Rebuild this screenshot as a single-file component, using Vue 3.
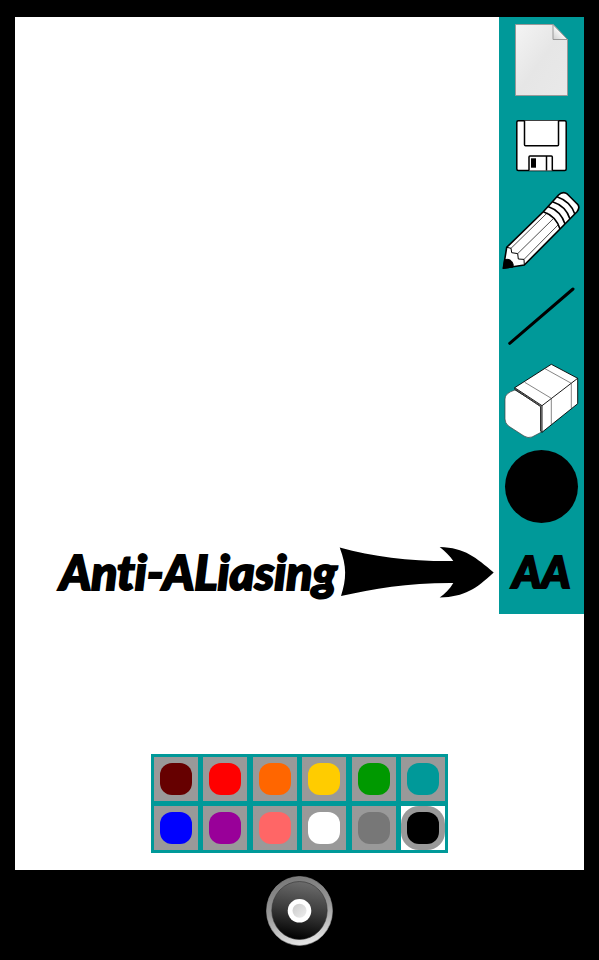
<script setup>
import { ref } from 'vue'

const colors = [
  { name: 'Maroon', value: '#660000' },
  { name: 'Red', value: '#ff0000' },
  { name: 'Orange', value: '#ff6600' },
  { name: 'Yellow', value: '#ffcc00' },
  { name: 'Green', value: '#009900' },
  { name: 'Teal', value: '#009999' },
  { name: 'Blue', value: '#0000ff' },
  { name: 'Purple', value: '#990099' },
  { name: 'Pink', value: '#ff6666' },
  { name: 'White', value: '#ffffff' },
  { name: 'Gray', value: '#777777' },
  { name: 'Black', value: '#000000' }
]
const selected = ref('Black')
</script>

<template>
  <div class="device">
    <main class="screen">
      <div class="workspace">
        <section class="canvas">
          <div class="callout">
            <span class="callout-text">Anti-ALiasing</span>
            <svg class="arrow" viewBox="0 0 155 52" aria-hidden="true">
              <path d="M.7 1.4 C35 10.7 72 15.4 114.3 15 C111 10 106 5 100.7 1 C126 1.7 137 11.7 154.7 26.4 C137 42.7 126 50.7 100.7 51.4 C106 47.7 111 42.7 114.3 37 C70 36.7 35 42.7 2 50 C7.5 32.7 8 20.7 .7 1.4Z" />
            </svg>
          </div>
        </section>

        <nav class="toolbar" aria-label="Tools">
          <button class="tool" type="button" aria-label="New page">
            <svg viewBox="0 0 85 85">
              <defs>
                <linearGradient id="paper" x1="0" y1="0" x2="1" y2="1">
                  <stop offset="0" stop-color="#f4f4f4" />
                  <stop offset=".5" stop-color="#e6e6e6" />
                  <stop offset="1" stop-color="#e9e9e9" />
                </linearGradient>
                <linearGradient id="fold" x1="0" y1="1" x2=".6" y2=".4">
                  <stop offset="0" stop-color="#cfcfcf" />
                  <stop offset="1" stop-color="#ffffff" />
                </linearGradient>
              </defs>
              <path d="M16.5 6.5H54L68.5 21.5V77.5H16.5Z" fill="url(#paper)" stroke="#999" />
              <path d="M54 6.5L68.5 21.5H54Z" fill="url(#fold)" stroke="#999" />
            </svg>
          </button>

          <button class="tool" type="button" aria-label="Save">
            <svg viewBox="0 0 85 85" fill="#fff" stroke="#000" stroke-width="1.5">
              <rect x="17.8" y="17.7" width="49.4" height="49.8" rx="1.5" />
              <path d="M25.5 17.7V41.8Q25.5 42.8 26.5 42.8H58.5Q59.5 42.8 59.5 41.8V17.7" />
              <path d="M30 67.5V54Q30 53 31 53H52.3Q53.3 53 53.3 54V67.5M47.5 53V67.5" />
              <rect x="32" y="55.3" width="5" height="9.4" fill="#000" stroke="none" />
            </svg>
          </button>

          <button class="tool" type="button" aria-label="Pencil">
            <svg viewBox="0 0 85 85" fill="none" stroke="#000" stroke-linejoin="round">
              <path d="M4.3 80.3L7.7 59.3L44.3 23.7L59.5 7Q64 2.7 68.5 6.2L78 15.7Q81.7 19 78 23.7L61 41L25.3 77Z" fill="#fff" stroke-width="1.6" />
              <path d="M4.3 80.3L5.5 71.8Q11 70 13.5 74.5Q14.8 77 13.8 79.2Z" fill="#000" />
              <path d="M7.7 59.3L12 60.3L12.7 64.7L18.7 65.6L19.3 71L25 71.4L25.3 77" />
              <path d="M12 60.3L48.3 24.8M18.7 65.6L54.5 30.5M25 71.4L59.5 36.5" stroke="#222" stroke-width=".8" />
              <path d="M44.3 23.7Q57 28 61 41M49 18.5Q62 23 66 36M53.5 13.7Q67 18 71 31M58 8.8Q71.5 13.5 75.8 26" stroke-width="1.6" />
            </svg>
          </button>

          <button class="tool" type="button" aria-label="Line">
            <svg viewBox="0 0 85 85">
              <path d="M10.7 70.3L74 16" stroke="#000" stroke-width="3" stroke-linecap="round" />
            </svg>
          </button>

          <button class="tool" type="button" aria-label="Eraser">
            <svg viewBox="0 0 85 85" fill="#fff" stroke="#000" stroke-width=".9" stroke-linejoin="round">
              <path d="M16 32Q6 35 6 41V61Q6 65 9.5 68L25 78Q29 80.5 33 79L42 74.3V47.7Z" stroke="#444" stroke-width=".7" />
              <path d="M15.7 29.7L52.3 6.3L78.7 20.3V45.7L43 74.3L41.5 73V48.5L16 31.5Z" />
              <path d="M15.7 29.7L43 47.7L78.7 20.3M43 47.7V74.3" fill="none" />
              <path d="M16.5 31L42 48.3V73" fill="none" stroke="#444" stroke-width="1.1" />
              <path d="M25.7 24.3L52.3 40.3V67M46 10.7L72.3 25.3V50.5" fill="none" stroke="#333" stroke-width=".6" />
            </svg>
          </button>

          <button class="tool" type="button" aria-label="Brush size">
            <svg viewBox="0 0 85 85"><circle cx="42.5" cy="43.5" r="36.5" /></svg>
          </button>

          <button class="tool aa" type="button" aria-label="Anti-aliasing">AA</button>
        </nav>
      </div>

      <div class="palette" role="group" aria-label="Colors">
        <button
          v-for="color in colors"
          :key="color.name"
          type="button"
          class="cell"
          :class="{ selected: selected === color.name }"
          :aria-label="color.name"
          :aria-pressed="selected === color.name"
          @click="selected = color.name"
        >
          <span class="ring"><span class="swatch" :style="{ background: color.value }"></span></span>
        </button>
      </div>
    </main>

    <footer class="bezel">
      <button class="home" type="button" aria-label="Home">
        <svg viewBox="0 0 68 70">
          <defs>
            <linearGradient id="rim" x1=".3" y1="0" x2=".5" y2="1">
              <stop offset="0" stop-color="#777" />
              <stop offset=".5" stop-color="#999" />
              <stop offset="1" stop-color="#e6e6e6" />
            </linearGradient>
            <linearGradient id="face" x1=".6" y1="0" x2=".45" y2="1">
              <stop offset="0" stop-color="#6c6c6c" />
              <stop offset=".5" stop-color="#3b3b3b" />
              <stop offset="1" stop-color="#000" />
            </linearGradient>
            <linearGradient id="dot" x1="0" y1="0" x2="1" y2="1">
              <stop offset="0" stop-color="#cacaca" />
              <stop offset="1" stop-color="#eee" />
            </linearGradient>
          </defs>
          <ellipse cx="33.5" cy="35" rx="33" ry="34.5" fill="url(#rim)" stroke="#999" stroke-width=".6" />
          <ellipse cx="33.5" cy="34.5" rx="27.7" ry="29" fill="url(#face)" stroke="#333" stroke-width=".6" />
          <circle cx="33.5" cy="34.8" r="11.8" fill="#fff" />
          <circle cx="33.5" cy="34.8" r="7" fill="url(#dot)" />
        </svg>
      </button>
    </footer>
  </div>
</template>

<style>
body {
  margin: 0;
  background: #000;
}
</style>

<style scoped>
.device {
  box-sizing: border-box;
  min-height: 100vh;
  display: flex;
  flex-direction: column;
  padding: 17px 15px 0;
  background: #000;
}
button {
  margin: 0;
  padding: 0;
  border: 0;
  background: none;
  color: inherit;
  cursor: pointer;
}
svg {
  display: block;
}
.screen {
  flex: 1;
  display: flex;
  flex-direction: column;
  justify-content: space-between;
  align-items: center;
  padding-bottom: 17px;
  background: #fff;
}
.workspace {
  align-self: stretch;
  display: flex;
}
.canvas {
  flex: 1;
  display: flex;
  align-items: flex-end;
  justify-content: flex-end;
}
.callout {
  display: flex;
  align-items: center;
  height: 84px;
  padding-right: 5px;
}
.callout-text,
.aa {
  font-family: Forte, "Brush Script MT", Lato, "Liberation Sans", sans-serif;
  font-style: italic;
  font-weight: 900;
  font-variant-ligatures: none;
  color: #000;
  -webkit-text-stroke: 2px #000;
}
.callout-text {
  padding-right: 2px;
  font-size: 48px;
  line-height: 56px;
  white-space: nowrap;
}
.arrow {
  width: 155px;
  height: 52px;
}
.toolbar {
  display: grid;
  grid-template-columns: 85px;
  grid-auto-rows: 85px;
  padding: 1px 0;
  background: #099;
}
.aa {
  font-size: 44px;
  line-height: 48px;
}
.palette {
  display: grid;
  grid-template-columns: repeat(6, 44px);
  grid-auto-rows: 44px;
  justify-content: space-between;
  row-gap: 5px;
  box-sizing: border-box;
  width: 297px;
  padding: 3px;
  background: #099;
}
.cell {
  background: #999;
}
.cell.selected {
  background: #fff;
}
.ring {
  display: flex;
  align-items: center;
  justify-content: center;
  height: 44px;
  border-radius: 18px;
  background: #999;
}
.swatch {
  width: 32px;
  height: 32px;
  border-radius: 12px;
}
.bezel {
  display: flex;
  justify-content: center;
  padding: 6px 0 14px;
}
.home svg {
  width: 68px;
  height: 70px;
}
</style>
